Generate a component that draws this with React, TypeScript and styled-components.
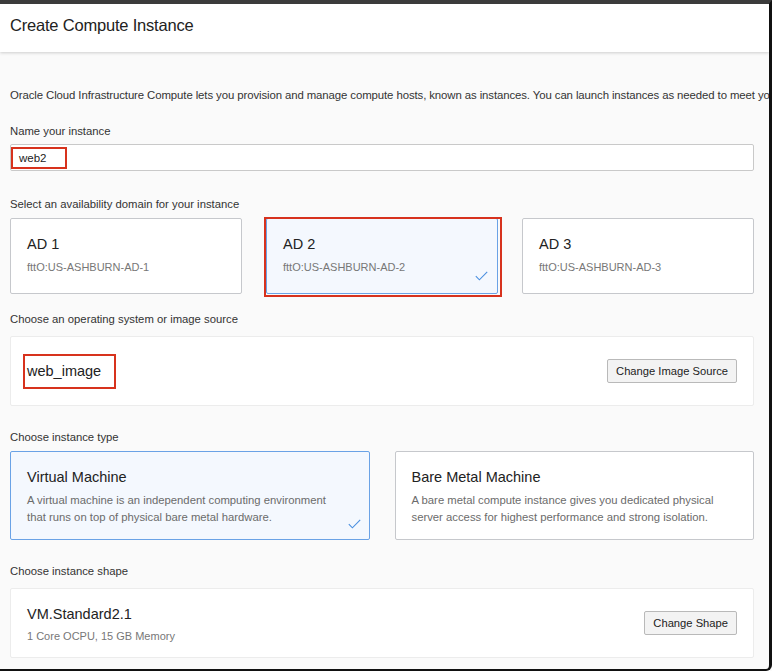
import React from "react";
import styled, { createGlobalStyle } from "styled-components";

const Global = createGlobalStyle`
  html, body { margin: 0; padding: 0; background: #fafafa; }
  * { box-sizing: border-box; }
  body { font-family: "Liberation Sans", Arial, Helvetica, sans-serif; color: #333; }
`;

const Frame = styled.div`
  width: 772px;
  height: 671px;
  border-top: 4px solid #3b3b3b;
  border-right: 3px solid #111;
  border-bottom: 2px solid #111;
  border-bottom-right-radius: 6px;
  background: #fafafa;
  overflow: hidden;
  display: flex;
  flex-direction: column;
`;

const Header = styled.header`
  height: 48px;
  flex: none;
  background: #fff;
  display: flex;
  align-items: center;
  padding: 0 10px 6px;
  box-shadow: 0 1px 3px rgba(0, 0, 0, 0.18);
  position: relative;
  z-index: 1;
`;

const Title = styled.h1`
  margin: 0;
  font-size: 16.5px;
  font-weight: 400;
  color: #222;
  letter-spacing: -0.2px;
`;

const Body = styled.main`
  padding: 36px 10px 0;
  display: flex;
  flex-direction: column;
`;

const Intro = styled.p`
  margin: 0;
  font-size: 11.4px;
  line-height: 14px;
  color: #333;
  white-space: nowrap;
  letter-spacing: -0.1px;
`;

const Label = styled.div<{ $gap: number }>`
  margin-top: ${(p) => p.$gap}px;
  font-size: 11.3px;
  line-height: 14px;
  color: #333;
`;

const InputBox = styled.div`
  margin-top: 6px;
  width: 744px;
  height: 27px;
  background: #fff;
  border: 1px solid #c9c9c9;
  border-radius: 2px;
  display: flex;
  align-items: center;
`;

const Mark = styled.span`
  border: 2px solid #d7321d;
`;

const NameMark = styled(Mark)`
  width: 56px;
  height: 22px;
  display: flex;
  align-items: center;
  padding-left: 6px;
  font-size: 11.5px;
  color: #222;
`;

const CardRow = styled.div<{ $gap: number }>`
  margin-top: 7px;
  width: 744px;
  display: grid;
  grid-template-columns: 1fr 1fr 1fr;
  column-gap: ${(p) => p.$gap}px;
`;

const TypeRow = styled(CardRow)`
  grid-template-columns: 1fr 1fr;
`;

const Card = styled.div<{ $selected?: boolean; $h: number }>`
  position: relative;
  height: ${(p) => p.$h}px;
  background: ${(p) => (p.$selected ? "#f4f8fe" : "#fff")};
  border: 1px solid ${(p) => (p.$selected ? "#6aa2e6" : "#c6c8cc")};
  border-radius: 2px;
  padding: 16px 16px 0;
  display: flex;
  flex-direction: column;
`;

const CardMark = styled(Mark)`
  position: absolute;
  top: -2px;
  left: -3px;
  right: -5px;
  bottom: -4px;
  pointer-events: none;
`;

const CardTitle = styled.div`
  font-size: 14.5px;
  line-height: 18px;
  color: #222;
`;

const CardSub = styled.div`
  margin-top: 7px;
  font-size: 11px;
  line-height: 14px;
  color: #777;
`;

const CardDesc = styled.div`
  margin-top: 6px;
  font-size: 11.3px;
  line-height: 17px;
  color: #6b6b6b;
`;

const Check = styled.svg<{ $r: number; $b: number }>`
  position: absolute;
  right: ${(p) => p.$r}px;
  bottom: ${(p) => p.$b}px;
  width: 13px;
  height: 10px;
`;

const Panel = styled.div`
  margin-top: 10px;
  width: 744px;
  height: 70px;
  background: #fff;
  border: 1px solid #ececec;
  border-radius: 2px;
  display: flex;
  align-items: center;
  justify-content: space-between;
  padding: 0 16px 0 12px;
`;

const ImageMark = styled(Mark)`
  width: 93px;
  height: 35px;
  display: flex;
  align-items: center;
  padding-left: 2px;
  font-size: 14.5px;
  color: #222;
`;

const ShapeInfo = styled.div`
  display: flex;
  flex-direction: column;
  padding-left: 4px;
  padding-top: 2px;
`;

const ShapeSub = styled.div`
  margin-top: 6px;
  font-size: 11px;
  line-height: 14px;
  color: #777;
`;

const Button = styled.button`
  height: 24px;
  padding: 0 8px;
  background: #f3f3f3;
  border: 1px solid #b9b9b9;
  border-radius: 2px;
  font-family: inherit;
  font-size: 11.2px;
  color: #222;
`;

const CheckIcon = ({ r, b }: { r: number; b: number }) => (
  <Check $r={r} $b={b} viewBox="0 0 13 10">
    <polyline points="0.8,5.2 4.4,8.8 12.2,0.8" fill="none" stroke="#4a8fe0" strokeWidth="1.1" />
  </Check>
);

const ads = [
  { t: "AD 1", s: "fttO:US-ASHBURN-AD-1", sel: false },
  { t: "AD 2", s: "fttO:US-ASHBURN-AD-2", sel: true },
  { t: "AD 3", s: "fttO:US-ASHBURN-AD-3", sel: false },
];

const types = [
  {
    t: "Virtual Machine",
    d: ["A virtual machine is an independent computing environment", "that runs on top of physical bare metal hardware."],
    sel: true,
  },
  {
    t: "Bare Metal Machine",
    d: ["A bare metal compute instance gives you dedicated physical", "server access for highest performance and strong isolation."],
    sel: false,
  },
];

export default function App() {
  return (
    <>
      <Global />
      <Frame>
        <Header>
          <Title>Create Compute Instance</Title>
        </Header>
        <Body>
          <Intro>
            Oracle Cloud Infrastructure Compute lets you provision and manage compute hosts, known as instances. You can launch instances as needed to meet your
          </Intro>
          <Label $gap={22}>Name your instance</Label>
          <InputBox>
            <NameMark>web2</NameMark>
          </InputBox>
          <Label $gap={26}>Select an availability domain for your instance</Label>
          <CardRow $gap={24}>
            {ads.map((a) => (
              <Card key={a.t} $selected={a.sel} $h={76}>
                <CardTitle>{a.t}</CardTitle>
                <CardSub>{a.s}</CardSub>
                {a.sel && <CheckIcon r={9} b={12} />}
                {a.sel && <CardMark />}
              </Card>
            ))}
          </CardRow>
          <Label $gap={18}>Choose an operating system or image source</Label>
          <Panel>
            <ImageMark>web_image</ImageMark>
            <Button>Change Image Source</Button>
          </Panel>
          <Label $gap={24}>Choose instance type</Label>
          <TypeRow $gap={25}>
            {types.map((c) => (
              <Card key={c.t} $selected={c.sel} $h={89}>
                <CardTitle>{c.t}</CardTitle>
                <CardDesc>
                  {c.d[0]}
                  <br />
                  {c.d[1]}
                </CardDesc>
                {c.sel && <CheckIcon r={8} b={10} />}
              </Card>
            ))}
          </TypeRow>
          <Label $gap={24}>Choose instance shape</Label>
          <Panel>
            <ShapeInfo>
              <CardTitle>VM.Standard2.1</CardTitle>
              <ShapeSub>1 Core OCPU, 15 GB Memory</ShapeSub>
            </ShapeInfo>
            <Button>Change Shape</Button>
          </Panel>
        </Body>
      </Frame>
    </>
  );
}
